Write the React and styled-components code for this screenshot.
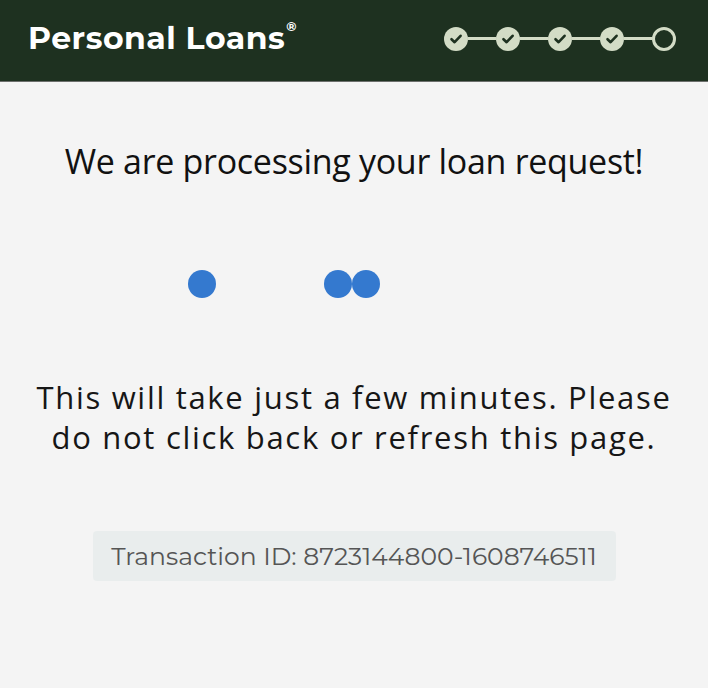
import styled, { createGlobalStyle } from "styled-components";

const GlobalStyle = createGlobalStyle`
  html, body {
    margin: 0;
    padding: 0;
    background: #f4f4f4;
  }
`;

const STEPS = [true, true, true, true, false];

const Step = ({ done }) => (
  <StepCircle done={done}>
    {done && (
      <svg width="14" height="14" viewBox="0 0 14 14">
        <path
          d="M2.5 7.2 L5.6 10.2 L11.6 3.8"
          fill="none"
          stroke="#1e3120"
          strokeWidth="2.6"
          strokeLinecap="round"
          strokeLinejoin="round"
        />
      </svg>
    )}
  </StepCircle>
);

export default function App() {
  return (
    <Page>
      <GlobalStyle />
      <Header>
        <Brand>
          Personal Loans<sup>®</sup>
        </Brand>
        <Steps>
          {STEPS.map((done, i) => (
            <StepItem key={i} first={i === 0}>
              <Step done={done} />
            </StepItem>
          ))}
        </Steps>
      </Header>
      <Main>
        <Heading>We are processing your loan request!</Heading>
        <Loader>
          <Dot />
          <Dot gap={108} />
          <Dot />
        </Loader>
        <Message>
          This will take just a few minutes. Please
          <br />
          do not click back or refresh this page.
        </Message>
        <TransactionBox>Transaction ID: 8723144800-1608746511</TransactionBox>
      </Main>
    </Page>
  );
}

const Page = styled.div`
  width: 708px;
  height: 688px;
  background: #f4f4f4;
  overflow: hidden;
`;

const Header = styled.header`
  height: 82px;
  background: #1e3120;
  border-bottom: 1px solid #6c6f6c;
  display: flex;
  align-items: center;
  justify-content: space-between;
  padding: 0 32px 0 28px;
  box-sizing: border-box;
`;

const Brand = styled.h1`
  margin: 0;
  font-family: "Montserrat", "Inter", sans-serif;
  font-weight: 700;
  font-size: 31.5px;
  color: #ffffff;
  letter-spacing: 0.5px;
  padding-bottom: 6px;
  & > sup {
    font-size: 13px;
    vertical-align: top;
    position: relative;
    top: -1px;
    margin-left: 1px;
  }
`;

const Steps = styled.div`
  display: flex;
  align-items: center;
  padding-bottom: 4px;
`;

const StepItem = styled.div`
  display: flex;
  align-items: center;
  &::before {
    content: "";
    display: ${(p) => (p.first ? "none" : "block")};
    width: 28px;
    height: 3px;
    background: #d3dcc6;
  }
`;

const StepCircle = styled.div`
  width: 24px;
  height: 24px;
  border-radius: 50%;
  box-sizing: border-box;
  display: flex;
  align-items: center;
  justify-content: center;
  background: ${(p) => (p.done ? "#d3dcc6" : "transparent")};
  border: ${(p) => (p.done ? "none" : "3px solid #d3dcc6")};
`;

const Main = styled.main`
  display: flex;
  flex-direction: column;
  align-items: center;
  padding-top: 56px;
`;

const Heading = styled.h2`
  margin: 0;
  font-family: "Open Sans", sans-serif;
  font-weight: 400;
  font-size: 34px;
  color: #111;
  letter-spacing: -0.3px;
`;

const Loader = styled.div`
  width: 360px;
  height: 28px;
  margin-top: 86px;
  display: flex;
  align-items: center;
  padding-left: 14px;
  box-sizing: border-box;
`;

const Dot = styled.span`
  width: 28px;
  height: 28px;
  border-radius: 50%;
  background: #3479cf;
  margin-left: ${(p) => (p.gap ? `${p.gap}px` : "0")};
`;

const Message = styled.p`
  margin: 80px 0 0;
  font-family: "Open Sans", sans-serif;
  font-weight: 400;
  font-size: 31px;
  line-height: 39.5px;
  letter-spacing: 1.7px;
  color: #161616;
  text-align: center;
`;

const TransactionBox = styled.div`
  margin-top: 74px;
  width: 523px;
  height: 50px;
  box-sizing: border-box;
  border-radius: 4px;
  background: #e9eded;
  display: flex;
  align-items: center;
  justify-content: center;
  font-family: "Montserrat", "Inter", sans-serif;
  font-size: 25px;
  color: #555;
`;
